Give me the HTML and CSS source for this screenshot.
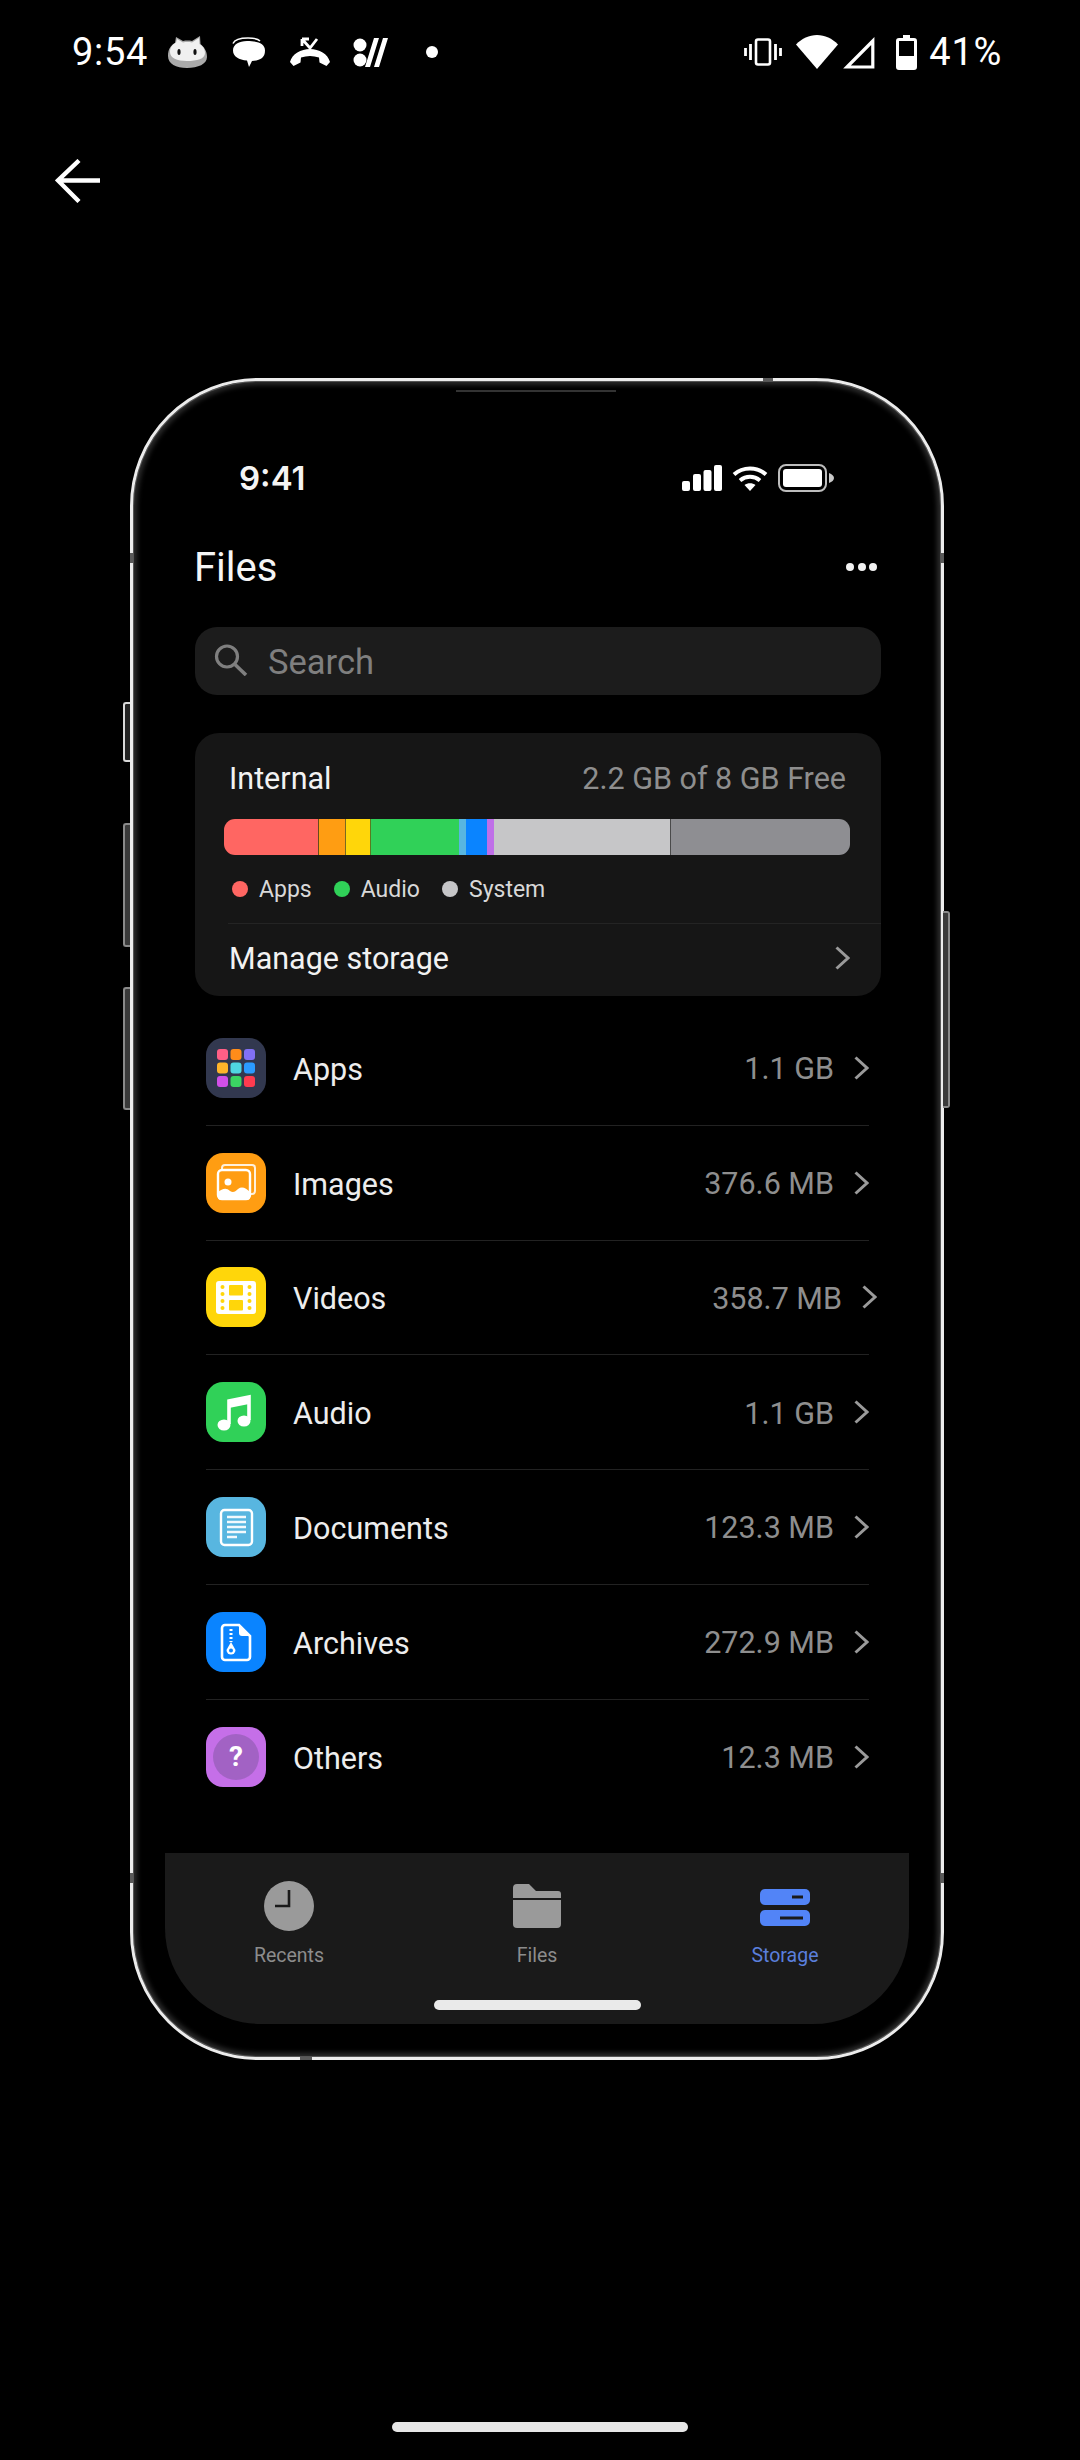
FILE: index.html
```html
<!DOCTYPE html>
<html lang="en">
<head>
<meta charset="utf-8">
<title>Files</title>
<link rel="stylesheet" href="styles.css">
</head>
<body>
<div class="device-status">
  <span class="device-time">9:54</span>
  <svg class="ic-cat" viewBox="0 0 40 32"><path d="M1 20C1 13 4 9 8 7L9 1l7 4c3-.6 6-.6 9 0l8-5 .5 8C37 11 40 15 40 21c0 7-9 11-20 11S1 28 1 20z" fill="#a9a9a9"/><path d="M3 16c0-5 3-8 6-9.500L10 3l6 3.500c3-.6 6-.6 9 0L32 2l.5 6c3.500 2 5.500 5 5.500 9 0 6-8 8-18 8S3 22 3 16z" fill="#f0f0f0"/><ellipse cx="12" cy="16" rx="1.600" ry="3" fill="#111"/><ellipse cx="28" cy="16" rx="1.600" ry="3" fill="#111"/></svg>
  <svg class="ic-bubble" viewBox="0 0 34 30"><path d="M1 6.500C3 2 8 1 16 1c6 0 10 .5 12 3" fill="none" stroke="#fff" stroke-width="1.500"/><path d="M15 4c10 0 18 2 18 9.500S28 23.500 20 24l-3 6-2-6.500C7 23 1 19.500 1 13.500S7 4 15 4z" fill="#fff"/></svg>
  <svg class="ic-missed" viewBox="0 0 42 30"><path d="M13 2l8 9 7-9M13 2v7M13 2h7" fill="none" stroke="#fff" stroke-width="2.800"/><path d="M1 25c2-8 11-13 20-13s18 5 20 13l-3.500 4-7-3.500-.5-5c-6-2-12-2-18 0l-.5 5L4.500 29z" fill="#fff"/></svg>
  <svg class="ic-multi" viewBox="0 0 36 29"><circle cx="7" cy="7" r="6.500" fill="#fff"/><circle cx="7" cy="22" r="6.500" fill="#fff"/><path d="M21 0h5l-9 29h-5zM30 0h5l-9 29h-5z" fill="#fff"/></svg>
  <i class="device-dot"></i>
  <span class="device-spacer"></span>
  <svg class="ic-vibrate" viewBox="0 0 38 28"><rect x="12" y="1.500" width="14" height="25" rx="2" fill="none" stroke="#fff" stroke-width="2.600"/><path d="M1.500 10v8M6.500 6v16M31.500 6v16M36.500 10v8" stroke="#fff" stroke-width="2.800" fill="none"/></svg>
  <svg class="ic-wifi" viewBox="0 0 42 34"><path d="M0 9.500C6 3.500 13 0 21 0s15 3.500 21 9.500L21 34z" fill="#fff"/></svg>
  <svg class="ic-signal" viewBox="0 0 33 33"><path d="M30.800 5V31H5z" fill="none" stroke="#fff" stroke-width="3.200"/></svg>
  <svg class="ic-batt" viewBox="0 0 21 35"><path d="M7 0h7v3h4a3 3 0 0 1 3 3v26a3 3 0 0 1-3 3H3a3 3 0 0 1-3-3V6a3 3 0 0 1 3-3h4z" fill="#fff"/><rect x="3" y="6" width="15" height="15" fill="#000"/></svg>
  <span class="device-pct">41%</span>
</div>

<svg class="back" viewBox="0 0 46 44"><path d="M45 21.500H3M24 1.500L3 21.500l21 21" fill="none" stroke="#fff" stroke-width="4.400"/></svg>

<div class="phone">
  <i class="btn btn-mute"></i>
  <i class="btn btn-up"></i>
  <i class="btn btn-down"></i>
  <i class="btn btn-power"></i>
  <i class="speaker"></i>
  <i class="band band-top"></i>
  <i class="band band-bottom"></i>
  <i class="band band-l1"></i>
  <i class="band band-r1"></i>
  <i class="band band-l2"></i>
  <i class="band band-r2"></i>
  <div class="screen">
    <div class="ios-status">
      <span class="ios-time">9:41</span>
      <span class="ios-icons">
        <svg class="ic-ios-signal" viewBox="0 0 40 26"><rect x="0" y="16" width="8" height="10" rx="2" fill="#fff"/><rect x="11" y="9" width="8" height="17" rx="2" fill="#fff"/><rect x="21.500" y="5" width="8" height="21" rx="2" fill="#fff"/><rect x="32" y="0" width="8" height="26" rx="2" fill="#fff"/></svg>
        <svg class="ic-ios-wifi" viewBox="0 0 36 25"><path d="M2 8.500c9-8 23-8 32 0M8 14.500c6-5 14-5 20 0" fill="none" stroke="#fff" stroke-width="4"/><path d="M12.500 19c3-2.500 8-2.500 11 0L18 25z" fill="#fff"/></svg>
        <svg class="ic-ios-batt" viewBox="0 0 57 28"><rect x="1" y="1" width="47" height="26" rx="7" fill="none" stroke="#bdbdbd" stroke-width="2"/><rect x="5" y="5" width="39" height="18" rx="3" fill="#fff"/><path d="M51 9c3 1 5 3 5 5s-2 4-5 5z" fill="#c9c9c9"/></svg>
      </span>
    </div>

    <div class="title-row">
      <h1 class="title">Files</h1>
      <span class="dots"><i></i><i></i><i></i></span>
    </div>

    <div class="search">
      <svg class="ic-search" viewBox="0 0 34 32"><circle cx="13" cy="12.500" r="10.500" fill="none" stroke="#7f7f7f" stroke-width="3.200"/><path d="M21 20.500l11 10.500" stroke="#7f7f7f" stroke-width="3.600" fill="none"/></svg>
      <span class="search-text">Search</span>
    </div>

    <section class="card">
      <div class="card-head">
        <span class="card-name">Internal</span>
        <span class="card-free">2.2 GB of 8 GB Free</span>
      </div>
      <div class="bar">
        <i class="seg s-red"></i><i class="seg s-orange"></i><i class="seg s-yellow"></i><i class="seg s-green"></i><i class="seg s-sky"></i><i class="seg s-blue"></i><i class="seg s-purple"></i><i class="seg s-light"></i><i class="seg s-grey"></i>
      </div>
      <div class="legend">
        <span class="legend-item"><i class="dot d-red"></i>Apps</span>
        <span class="legend-item"><i class="dot d-green"></i>Audio</span>
        <span class="legend-item"><i class="dot d-grey"></i>System</span>
      </div>
      <div class="manage">
        <span>Manage storage</span>
        <svg class="chev" viewBox="0 0 15 24"><path d="M1.500 1.500L13 12 1.500 22.500" fill="none" stroke="#9a9a9a" stroke-width="3"/></svg>
      </div>
    </section>

    <ul class="list">
      <li class="row">
        <svg class="app" viewBox="0 0 60 60"><rect width="60" height="60" rx="17" fill="#32384f"/><rect x="11" y="11" width="11" height="11" rx="3" fill="#ff5f86"/><rect x="24.500" y="11" width="11" height="11" rx="3" fill="#ff8c1a"/><rect x="38" y="11" width="11" height="11" rx="3" fill="#8270f5"/><rect x="11" y="24.500" width="11" height="11" rx="3" fill="#ffb52a"/><rect x="24.500" y="24.500" width="11" height="11" rx="3" fill="#4fd6e2"/><rect x="38" y="24.500" width="11" height="11" rx="3" fill="#2b9bff"/><rect x="11" y="38" width="11" height="11" rx="3" fill="#d24fe8"/><rect x="24.500" y="38" width="11" height="11" rx="3" fill="#3bd463"/><rect x="38" y="38" width="11" height="11" rx="3" fill="#ff3b4f"/></svg>
        <span class="row-name">Apps</span>
        <span class="row-end"><span class="row-val">1.1 GB</span><svg class="chev" viewBox="0 0 15 24"><path d="M1.500 1.500L13 12 1.500 22.500" fill="none" stroke="#9a9a9a" stroke-width="3"/></svg></span>
      </li>
      <li class="row">
        <svg class="app" viewBox="0 0 60 60"><rect width="60" height="60" rx="17" fill="#ff9d12"/><path d="M16 16v-1a3 3 0 0 1 3-3h27a3 3 0 0 1 3 3v23a3 3 0 0 1-3 3h-1" fill="none" stroke="#fff" stroke-width="2" opacity=".85"/><rect x="12" y="17" width="32" height="29" rx="4" fill="none" stroke="#fff" stroke-width="2.400"/><circle cx="22" cy="29" r="3.500" fill="#fff"/><path d="M12 44v-5c4-3 8-5 12-1 3 2 5 1 8-2 4-3 8-1 12 3v5a3 3 0 0 1-3 3H15a3 3 0 0 1-3-3z" fill="#fff"/></svg>
        <span class="row-name">Images</span>
        <span class="row-end"><span class="row-val">376.6 MB</span><svg class="chev" viewBox="0 0 15 24"><path d="M1.500 1.500L13 12 1.500 22.500" fill="none" stroke="#9a9a9a" stroke-width="3"/></svg></span>
      </li>
      <li class="row row-shift">
        <svg class="app" viewBox="0 0 60 60"><rect width="60" height="60" rx="17" fill="#ffd60a"/><rect x="10" y="14" width="40" height="33" rx="3" fill="#fff"/><rect x="23" y="18" width="14" height="10.500" rx="1" fill="#ffd60a"/><rect x="23" y="33" width="14" height="10.500" rx="1" fill="#ffd60a"/><g fill="#ffd60a"><circle cx="16.500" cy="20" r="2"/><circle cx="16.500" cy="27" r="2"/><circle cx="16.500" cy="34" r="2"/><circle cx="16.500" cy="41" r="2"/><circle cx="43.500" cy="20" r="2"/><circle cx="43.500" cy="27" r="2"/><circle cx="43.500" cy="34" r="2"/><circle cx="43.500" cy="41" r="2"/></g></svg>
        <span class="row-name">Videos</span>
        <span class="row-end"><span class="row-val">358.7 MB</span><svg class="chev" viewBox="0 0 15 24"><path d="M1.500 1.500L13 12 1.500 22.500" fill="none" stroke="#9a9a9a" stroke-width="3"/></svg></span>
      </li>
      <li class="row">
        <svg class="app" viewBox="0 0 60 60"><rect width="60" height="60" rx="17" fill="#30d158"/><path d="M23 42V19l20-4v23" fill="none" stroke="#fff" stroke-width="3.600"/><path d="M23 20l20-4v6l-20 4z" fill="#fff"/><ellipse cx="18" cy="43" rx="6.500" ry="5.500" fill="#fff"/><ellipse cx="38" cy="39" rx="6.500" ry="5.500" fill="#fff"/></svg>
        <span class="row-name">Audio</span>
        <span class="row-end"><span class="row-val">1.1 GB</span><svg class="chev" viewBox="0 0 15 24"><path d="M1.500 1.500L13 12 1.500 22.500" fill="none" stroke="#9a9a9a" stroke-width="3"/></svg></span>
      </li>
      <li class="row">
        <svg class="app" viewBox="0 0 60 60"><rect width="60" height="60" rx="17" fill="#58b6e0"/><rect x="15" y="13" width="31" height="35" rx="3.500" fill="none" stroke="#fff" stroke-width="2.400"/><path d="M21 20h19M21 25h19M21 30h19M21 35h19M21 40h10" stroke="#fff" stroke-width="2.400" fill="none" opacity=".92"/></svg>
        <span class="row-name">Documents</span>
        <span class="row-end"><span class="row-val">123.3 MB</span><svg class="chev" viewBox="0 0 15 24"><path d="M1.500 1.500L13 12 1.500 22.500" fill="none" stroke="#9a9a9a" stroke-width="3"/></svg></span>
      </li>
      <li class="row">
        <svg class="app" viewBox="0 0 60 60"><rect width="60" height="60" rx="17" fill="#0a84ff"/><path d="M16 16a3 3 0 0 1 3-3h14l11 11v21a3 3 0 0 1-3 3H19a3 3 0 0 1-3-3z" fill="none" stroke="#fff" stroke-width="2.600"/><path d="M33 13v8a3 3 0 0 0 3 3h8z" fill="#fff"/><path d="M25 17v13" stroke="#fff" stroke-width="3" stroke-dasharray="2 2" fill="none"/><path d="M25 30l4.500 8a4.500 4.500 0 1 1-9 0z" fill="#fff"/><circle cx="25" cy="38.500" r="2" fill="#0a84ff"/></svg>
        <span class="row-name">Archives</span>
        <span class="row-end"><span class="row-val">272.9 MB</span><svg class="chev" viewBox="0 0 15 24"><path d="M1.500 1.500L13 12 1.500 22.500" fill="none" stroke="#9a9a9a" stroke-width="3"/></svg></span>
      </li>
      <li class="row row-last">
        <span class="app app-others"><span class="others-disc">?</span></span>
        <span class="row-name">Others</span>
        <span class="row-end"><span class="row-val">12.3 MB</span><svg class="chev" viewBox="0 0 15 24"><path d="M1.500 1.500L13 12 1.500 22.500" fill="none" stroke="#9a9a9a" stroke-width="3"/></svg></span>
      </li>
    </ul>

    <nav class="tabs">
      <div class="tab-grid">
        <div class="tab">
          <svg class="tab-ic" viewBox="0 0 50 50"><circle cx="25" cy="25" r="25" fill="#9a9a9a"/><path d="M25 9v16H11" fill="none" stroke="#1a1a1a" stroke-width="2.600"/></svg>
          <span>Recents</span>
        </div>
        <div class="tab">
          <svg class="tab-ic" viewBox="0 0 50 50"><path d="M1 15V7a4 4 0 0 1 4-4h12l7 7h22a3 3 0 0 1 3 3v4H1z" fill="#9a9a9a"/><path d="M1 19h48v24a4 4 0 0 1-4 4H5a4 4 0 0 1-4-4z" fill="#9a9a9a"/></svg>
          <span>Files</span>
        </div>
        <div class="tab tab-on">
          <svg class="tab-ic" viewBox="0 0 50 50"><rect y="8" width="50" height="16" rx="5" fill="#5284f7"/><rect y="29" width="50" height="16" rx="5" fill="#5284f7"/><rect x="32" y="14.500" width="11" height="3" fill="#1a1a1a"/><rect x="20" y="35.500" width="23" height="3" fill="#1a1a1a"/></svg>
          <span>Storage</span>
        </div>
      </div>
      <i class="ios-home"></i>
    </nav>
  </div>
</div>

<i class="device-home"></i>
</body>
</html>
```
FILE: styles.css
```css
* { box-sizing: border-box; }
html, body { margin: 0; padding: 0; }
body {
  width: 1080px;
  height: 2460px;
  background: #000;
  color: #f2f2f2;
  font-family: Roboto, "Liberation Sans", sans-serif;
  overflow: hidden;
  display: flex;
  flex-direction: column;
}
i { display: block; }

/* device status bar */
.device-status {
  height: 104px;
  padding: 0 78px 0 72px;
  display: flex;
  align-items: center;
  flex: none;
}
.device-time, .device-pct { font-size: 38px; letter-spacing: .7px; color: #fff; line-height: 1; }
.device-spacer { flex: 1; }
.ic-cat { width: 40px; height: 32px; margin-left: 19px; }
.ic-bubble { width: 34px; height: 30px; margin-left: 25px; }
.ic-missed { width: 42px; height: 30px; margin-left: 23px; }
.ic-multi { width: 36px; height: 29px; margin-left: 22px; }
.device-dot { width: 12px; height: 12px; border-radius: 50%; background: #fff; margin-left: 37px; }
.ic-vibrate { width: 38px; height: 28px; }
.ic-wifi { width: 42px; height: 34px; margin-left: 14px; }
.ic-signal { width: 33px; height: 33px; margin-left: 4px; }
.ic-batt { width: 21px; height: 35px; margin-left: 21px; }
.device-pct { margin-left: 12px; }

.back { width: 46px; height: 44px; margin: 55px 0 0 55px; flex: none; display: block; }

/* phone frame */
.phone {
  position: relative;
  flex: none;
  width: 814px;
  height: 1682px;
  margin: 175px 0 0 130px;
  padding: 0 32px 33px;
  border: 3px solid #ececec;
  border-radius: 128px;
  box-shadow: inset 0 0 0 1px #555, inset 0 0 5px 4px #2c2c2c;
  display: flex;
}
.btn {
  position: absolute;
  width: 7px;
  border: 2px solid #8a8a8a;
  border-right: 0;
  border-radius: 3px 0 0 3px;
  background: #3a3a3a;
}
.btn-mute { left: -10px; top: 321px; height: 60px; border-color: #d8d8d8; background: #222; }
.btn-up { left: -10px; top: 442px; height: 124px; }
.btn-down { left: -10px; top: 606px; height: 123px; }
.btn-power {
  left: auto;
  right: -9px;
  top: 530px;
  height: 197px;
  border-radius: 0 3px 3px 0;
  border: 2px solid #8a8a8a;
  border-left: 0;
}
.speaker {
  position: absolute;
  left: 323px;
  top: 9px;
  width: 160px;
  height: 2px;
  background: #333;
}
.band { position: absolute; background: #5a5a5a; }
.band-top { top: -3px; left: 630px; width: 10px; height: 3px; }
.band-bottom { bottom: -3px; left: 167px; width: 12px; height: 3px; }
.band-l1 { left: -3px; top: 172px; width: 3px; height: 10px; }
.band-r1 { right: -3px; top: 172px; width: 3px; height: 10px; }
.band-l2 { left: -3px; top: 1492px; width: 3px; height: 10px; }
.band-r2 { right: -3px; top: 1492px; width: 3px; height: 10px; }

.screen {
  flex: 1;
  min-width: 0;
  display: flex;
  flex-direction: column;
}

.ios-status {
  height: 40px;
  margin-top: 77px;
  padding: 0 74px 0 74px;
  display: flex;
  align-items: center;
  justify-content: space-between;
  flex: none;
}
.ios-time { font-family: Inter, Roboto, sans-serif; font-weight: 600; font-size: 33px; color: #f4f4f4; }
.ios-icons { display: flex; align-items: center; gap: 10px; }
.ic-ios-signal { width: 40px; height: 26px; }
.ic-ios-wifi { width: 36px; height: 25px; }
.ic-ios-batt { width: 57px; height: 28px; }

.title-row {
  height: 48px;
  margin: 45px 32px 0 29px;
  display: flex;
  align-items: center;
  justify-content: space-between;
  flex: none;
}
.title { margin: 0; padding-top: 2px; font-size: 40px; font-weight: 400; color: #f5f5f5; line-height: 48px; }
.dots { display: flex; gap: 3.500px; }
.dots i { width: 8px; height: 8px; border-radius: 50%; background: #f2f2f2; }

.search {
  height: 68px;
  margin: 36px 28px 0 30px;
  padding-left: 19px;
  display: flex;
  align-items: center;
  gap: 20px;
  background: #1c1c1c;
  border-radius: 22px;
  color: #7f7f7f;
  font-size: 34.500px;
  flex: none;
}
.search-text { padding-top: 2px; }
.ic-search { width: 34px; height: 32px; margin-top: -2px; }

.card {
  height: 263px;
  margin: 38px 28px 0 30px;
  background: #161616;
  border-radius: 24px;
  padding-top: 28px;
  flex: none;
}
.card-head {
  height: 34px;
  padding: 0 35px 0 34px;
  display: flex;
  align-items: center;
  justify-content: space-between;
  font-size: 30.500px;
}
.card-name { color: #f2f2f2; }
.card-free { color: #8e8e8e; }
.bar {
  height: 36px;
  margin: 24px 31px 0 29px;
  border-radius: 11px;
  overflow: hidden;
  display: flex;
}
.seg { height: 100%; flex: none; }
.s-red { width: 94px; background: #ff6662; }
.s-orange { width: 27px; background: #ff9d12; border-left: 1px solid #6a4a1c; }
.s-yellow { width: 25px; background: #ffd60a; border-left: 1px solid #7a6a20; }
.s-green { width: 89px; background: #30d158; border-left: 1px solid #5a7a20; }
.s-sky { width: 7px; background: #58b6e0; }
.s-blue { width: 21px; background: #0a84ff; }
.s-purple { width: 7px; background: #bf6fe8; }
.s-light { width: 176px; background: #c6c6c8; }
.s-grey { flex: 1; background: #8e8e92; border-left: 1px solid #4a4a4a; }

.legend {
  height: 28px;
  margin-top: 20px;
  padding-left: 37px;
  display: flex;
  align-items: center;
  gap: 22px;
  font-size: 23px;
  color: #d8d8d8;
}
.legend-item { display: flex; align-items: center; gap: 11px; }
.dot { width: 16px; height: 16px; border-radius: 50%; }
.d-red { background: #ff6662; }
.d-green { background: #30d158; }
.d-grey { background: #c6c6c8; }
.manage {
  height: 73px;
  margin: 20px 0 0 33px;
  padding: 0 31px 4px 1px;
  border-top: 1px solid #242424;
  display: flex;
  align-items: center;
  justify-content: space-between;
  font-size: 30.500px;
  color: #f2f2f2;
}

.chev { width: 15px; height: 24px; flex: none; }

.list {
  list-style: none;
  margin: 15px 40px 0 41px;
  padding: 0;
  flex: none;
}
.row {
  height: 114.750px;
  display: flex;
  align-items: center;
  border-bottom: 1px solid #222;
  font-size: 30.500px;
}
.row-last { border-bottom: 0; }
.app { width: 60px; height: 60px; flex: none; display: block; }
.app-others {
  border-radius: 17px;
  background: #c56fe8;
  display: flex;
  align-items: center;
  justify-content: center;
}
.others-disc {
  width: 46px;
  height: 46px;
  border-radius: 50%;
  background: #a262c4;
  color: #fff;
  font-size: 28px;
  font-weight: 700;
  display: flex;
  align-items: center;
  justify-content: center;
}
.row-name { margin-left: 27px; padding-top: 3px; color: #ededed; }
.row-end { margin-left: auto; display: flex; align-items: center; gap: 20px; }
.row-val { padding-top: 2px; color: #8e8e8e; }
.row-shift .row-end { margin-right: -8px; }

/* bottom tabs */
.tabs {
  margin-top: auto;
  height: 171px;
  background: #1a1a1a;
  border-radius: 0 0 96px 96px;
  display: flex;
  flex-direction: column;
  align-items: center;
  flex: none;
}
.tab-grid {
  width: 100%;
  display: grid;
  grid-template-columns: repeat(3, 1fr);
  padding-top: 28px;
}
.tab {
  display: flex;
  flex-direction: column;
  align-items: center;
  gap: 13px;
  font-size: 19.500px;
  line-height: 24px;
  color: #8c8c8c;
}
.tab-on { color: #5a7fdc; }
.tab-ic { width: 50px; height: 50px; display: block; }
.ios-home {
  width: 207px;
  height: 10px;
  margin-top: 32px;
  border-radius: 5px;
  background: #eaeaea;
}

.device-home {
  flex: none;
  width: 296px;
  height: 10px;
  margin: 362px 0 0 392px;
  border-radius: 5px;
  background: #e6e6e6;
}
```
